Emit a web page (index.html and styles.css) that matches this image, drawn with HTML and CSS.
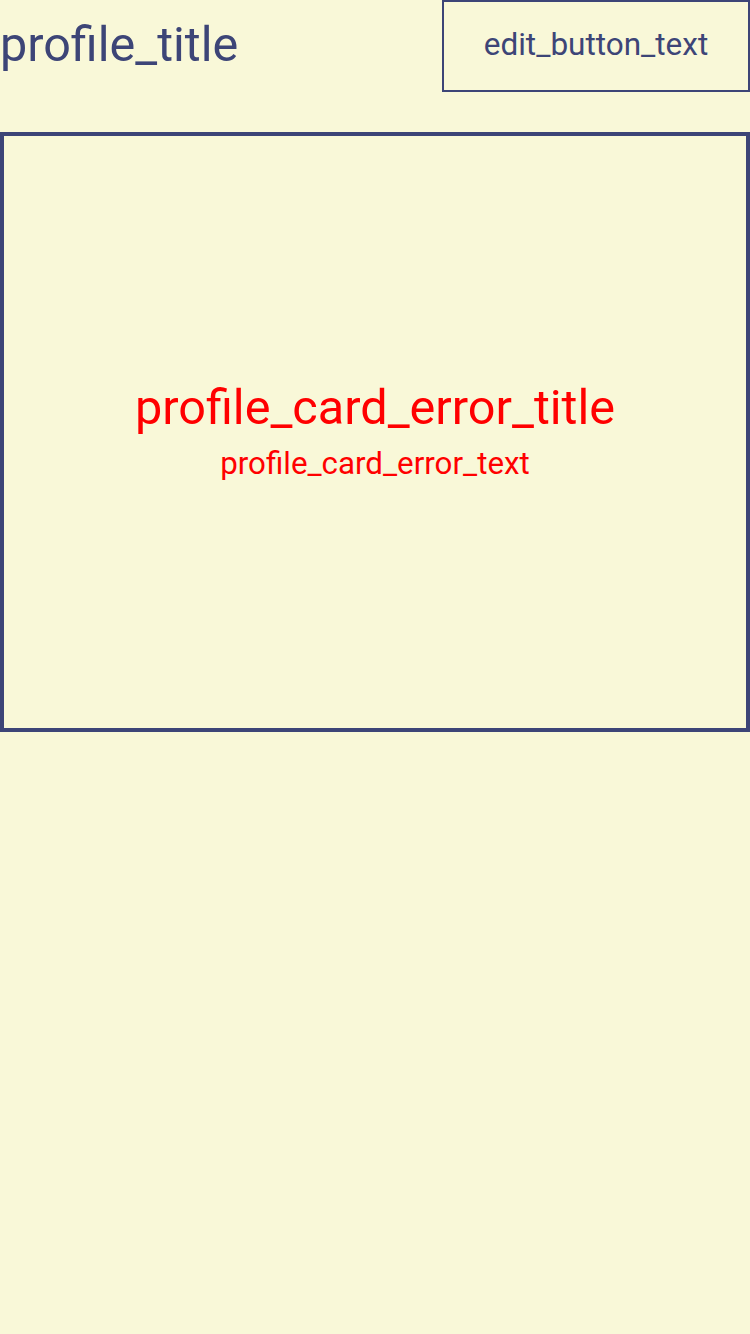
FILE: index.html
```html
<!DOCTYPE html>
<html>
<head>
<meta charset="utf-8">
<link rel="stylesheet" href="styles.css">
</head>
<body>
<div class="page">
  <header class="header">
    <h1 class="title">profile_title</h1>
    <button class="edit-btn">edit_button_text</button>
  </header>
  <section class="card">
    <div class="error-title">profile_card_error_title</div>
    <div class="error-text">profile_card_error_text</div>
  </section>
</div>
</body>
</html>
```
FILE: styles.css
```css
html, body {
  margin: 0;
  padding: 0;
  background: #f9f8d8;
  font-family: Roboto, "Liberation Sans", sans-serif;
}
.page {
  width: 750px;
  height: 1334px;
  display: flex;
  flex-direction: column;
}
.header {
  display: flex;
  justify-content: space-between;
  align-items: flex-start;
  height: 92px;
  margin-bottom: 40px;
}
.title {
  margin: 0;
  font-weight: 400;
  font-size: 48.5px;
  line-height: 90px;
  color: #3d4577;
}
.edit-btn {
  box-sizing: border-box;
  width: 308px;
  height: 92px;
  border: 2px solid #3d4577;
  background: transparent;
  color: #3d4577;
  font-family: Roboto, "Liberation Sans", sans-serif;
  font-size: 31.5px;
  line-height: 36px;
  padding: 0 0 2px 0;
}
.card {
  box-sizing: border-box;
  height: 600px;
  border: 4px solid #3d4577;
  display: flex;
  flex-direction: column;
  align-items: center;
  justify-content: center;
  gap: 9px;
  color: #ff0000;
}
.error-title {
  font-size: 48.6px;
  line-height: 54px;
}
.error-text {
  font-size: 31.3px;
  line-height: 40px;
}
```
